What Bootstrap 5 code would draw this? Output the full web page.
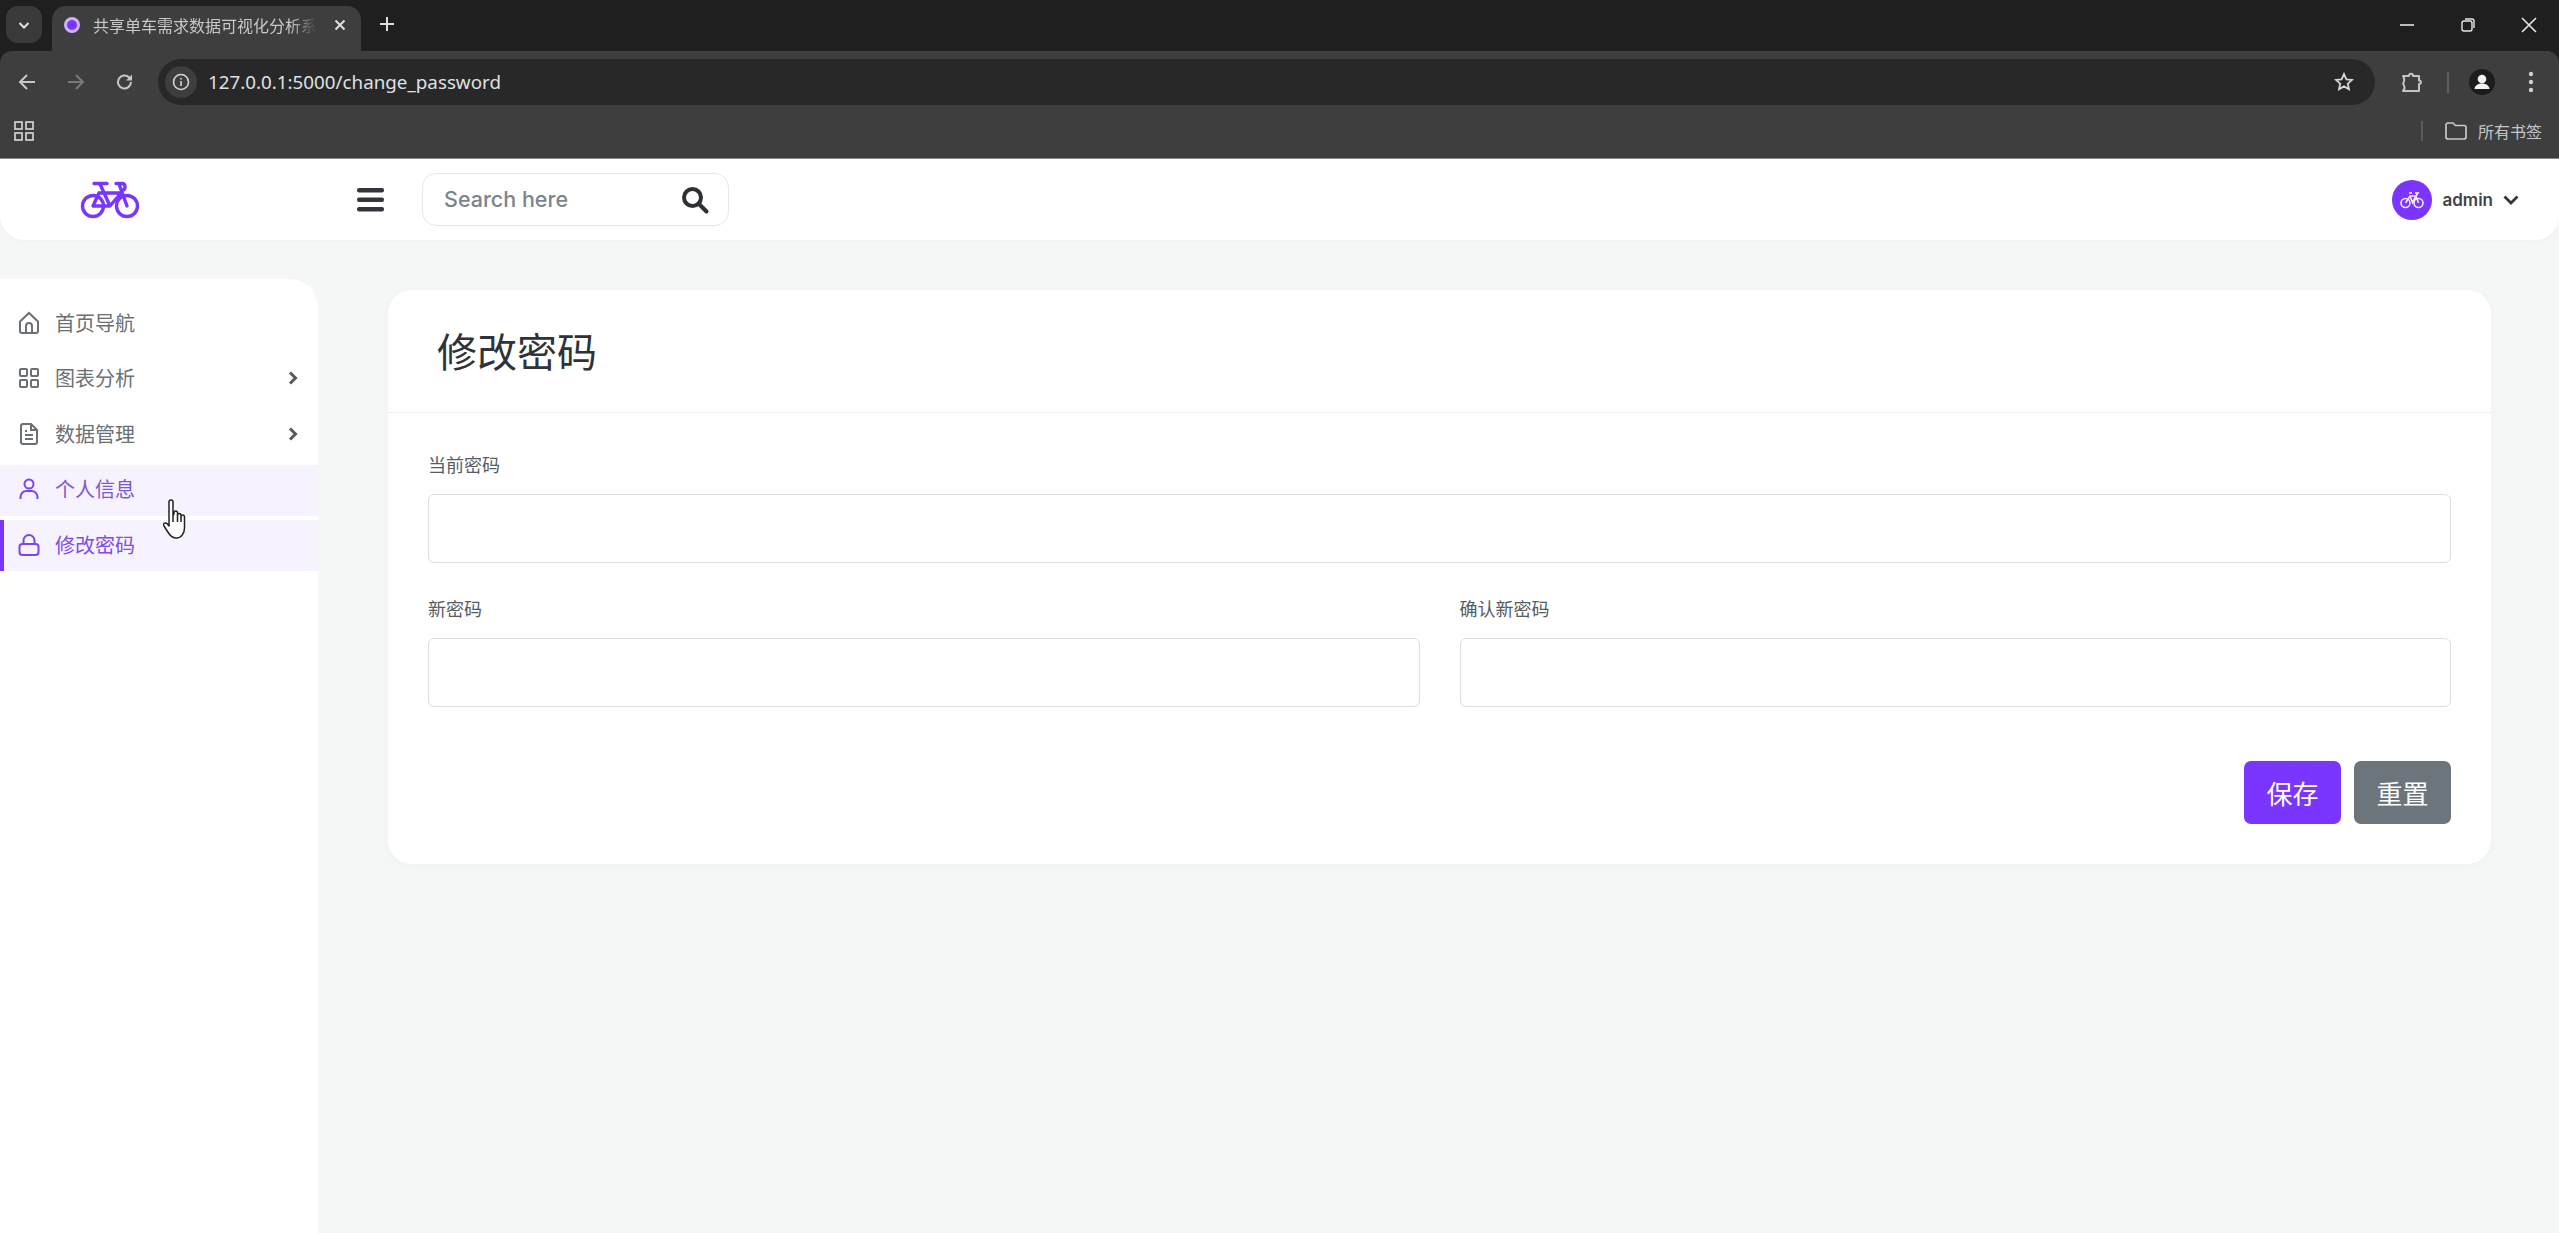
<!DOCTYPE html>
<html lang="zh-CN">
<head>
  <meta charset="UTF-8">
  <title>共享单车需求数据可视化分析系统</title>
  <link rel="stylesheet" href="https://cdn.jsdelivr.net/npm/bootstrap@5.3.0/dist/css/bootstrap.min.css">
  <style>
    html, body { height: 100%; }
    body { background: #f5f7f7; overflow: hidden; font-family: Inter, "Noto Sans CJK SC", sans-serif; position: relative; }

    /* browser chrome */
    .chrome-wrap { background: #1f1f1f; }
    .tab-strip { height: 51px; padding: 6px 0 0 6px; color: #dcdcdc; }
    .tab-more { width: 36px; height: 37px; border-radius: 12px; background: #3a3a3a; margin-right: 10px; }
    .tab-active { width: 309px; height: 45px; background: #3e3e3e; border-radius: 14px 14px 0 0; padding: 0 14px 7px 12px; }
    .tab-fav { width: 16px; height: 16px; border-radius: 50%; background: #7a35ff; border: 3px solid #c9b5f5; margin-right: 13px; flex: none; }
    .tab-title { width: 224px; font: 16px/20px "Noto Sans CJK SC", sans-serif; color: #c8c8c8; white-space: nowrap; -webkit-mask-image: linear-gradient(to right, #000 88%, transparent); mask-image: linear-gradient(to right, #000 88%, transparent); }
    .win-ctrls { gap: 45px; padding-right: 22px; padding-bottom: 7px; }
    .tool-row { height: 49px; background: #3e3e3e; border-radius: 12px 12px 0 0; padding: 8px 0 0 18px; }
    .tool-nav { gap: 31px; width: 140px; height: 46px; }
    .tool-right { height: 46px; }
    .url-pill { width: 2217px; height: 46px; background: #282828; border-radius: 23px; padding: 0 21px 0 7px; }
    .url-info { width: 32px; height: 32px; border-radius: 50%; background: #3e3e3e; margin-right: 11px; }
    .url-text { font: 18.8px/24px "Noto Sans", sans-serif; color: #dfe1e3; }
    .ext-ico { margin-left: 26px; }
    .ext-bar { height: 21px; margin-left: 24px; }
    .me-ico { margin-left: 20px; }
    .dots-ico { margin-left: 33px; }
    .bm-row { height: 59px; background: #3e3e3e; border-bottom: 1px solid #8a8a8a; padding: 4px 17px 0 14px; }
    .bm-text { font: 16px/20px "Noto Sans CJK SC", sans-serif; color: #c4c7c5; }
    .bm-bar { height: 20px; }
    .bm-folder { margin: 0 11px 0 22px; }
    .v-bar { width: 2px; background: #5c5c5c; }

    /* app header */
    .top-bar { height: 81px; background: #fff; border-radius: 0 0 24px 24px; padding: 0 40px 0 80px; box-shadow: 0 1px 4px rgba(60, 70, 80, .04); }
    .brand-wrap { width: 277px; }
    .search-box { width: 307px; height: 53px; border: 1px solid #e5e8ea; border-radius: 14px; margin-left: 38px; padding: 0 19px 0 21px; color: #7c848b; font-size: 21.5px; font-weight: 500; }
    .user-ava { width: 40px; height: 40px; border-radius: 50%; background: #7a35ff; }
    .user-name { font-size: 17px; font-weight: 600; color: #3f4448; margin: 0 10px 0 10px; line-height: 20px; }

    /* sidebar */
    .page-row { height: 993px; }
    .side-nav { width: 318px; margin-top: 39px; background: #fff; border-radius: 0 28px 0 0; padding-top: 19px; flex: none; gap: 4.5px; }
    .side-link { height: 51px; padding: 0 20px 2px 18px; color: #6b7075; font: 20px/26px "Noto Sans CJK SC", sans-serif; }
    .side-link:hover { color: #6b7075; }
    .side-link svg.ico { margin-right: 15px; }
    .side-link .arrow { margin-left: auto; }
    .side-hover { background: #f6f2fe; color: #7d58d0; }
    .side-hover:hover { color: #7d58d0; }
    .side-active { background: #f6f2fe; color: #7f4de8; box-shadow: inset 4px 0 0 #7a35ff; }
    .side-active:hover { color: #7f4de8; }

    /* main card */
    .main-area { flex: 1; padding: 50px 68px 0 70px; }
    .pwd-card { border: 0; border-radius: 24px; background: #fff; box-shadow: 0 2px 8px rgba(60, 70, 80, .03); }
    .pwd-head { height: 123px; background: #fff; border-bottom: 1px solid #eceef0; border-radius: 24px 24px 0 0 !important; padding: 0 0 3px 49px; font: 40px/50px "Noto Sans CJK SC", sans-serif; color: #2f3338; }
    .pwd-body { padding: 39px 40px 40px; }
    .pwd-label { font: 18px/24px "Noto Sans CJK SC", sans-serif; color: #565c62; margin-bottom: 18px; display: block; }
    .pwd-input { height: 69px; border: 1px solid #dcdfe2; border-radius: 6px; }
    .pwd-gap { margin-bottom: 33px; }
    .pwd-row { --bs-gutter-x: 40px; }
    .pwd-btns { margin-top: 54px; gap: 13px; }
    .pwd-btn { width: 97px; height: 63px; font: 26px/34px "Noto Sans CJK SC", sans-serif; border-radius: 7px; border: 0; color: #fff; padding: 0; }
    .btn-save { background: #7a35ff; }
    .btn-reset { background: #6d757c; }

    .hand-cursor { position: absolute; left: 163px; top: 499px; }
  </style>
</head>
<body>
  <div class="chrome-wrap">
    <div class="tab-strip d-flex align-items-start">
      <div class="tab-more d-flex align-items-center justify-content-center">
        <svg width="14" height="14" viewBox="0 0 14 14" fill="none" stroke="#e3e3e3" stroke-width="2"><path d="M2.500 5l4.500 4.500L11.500 5"/></svg>
      </div>
      <div class="tab-active d-flex align-items-center">
        <span class="tab-fav"></span>
        <span class="tab-title">共享单车需求数据可视化分析系</span>
        <svg class="ms-auto" width="14" height="14" viewBox="0 0 14 14" fill="none" stroke="#dedede" stroke-width="2"><path d="M2.500 2.500l9 9M11.500 2.500l-9 9"/></svg>
      </div>
      <svg class="ms-3 mt-2" width="20" height="20" viewBox="0 0 20 20" fill="none" stroke="#dedede" stroke-width="2"><path d="M10 3v14M3 10h14"/></svg>
      <div class="win-ctrls d-flex align-items-center ms-auto h-100">
        <svg width="16" height="16" viewBox="0 0 16 16" fill="none" stroke="#e6e6e6" stroke-width="1.600"><path d="M1 8h14"/></svg>
        <svg width="16" height="16" viewBox="0 0 16 16" fill="none" stroke="#e6e6e6" stroke-width="1.400"><rect x="2" y="4" width="10" height="10" rx="2"/><path d="M5 2h7a2 2 0 0 1 2 2v7"/></svg>
        <svg width="16" height="16" viewBox="0 0 16 16" fill="none" stroke="#e6e6e6" stroke-width="1.600"><path d="M1 1l14 14M15 1L1 15"/></svg>
      </div>
    </div>

    <div class="tool-row d-flex align-items-start">
      <div class="tool-nav d-flex align-items-center">
        <svg width="18" height="18" viewBox="0 0 18 18" fill="none" stroke="#c7c7c7" stroke-width="2"><path d="M17 9H2M9 2L2 9l7 7"/></svg>
        <svg width="18" height="18" viewBox="0 0 18 18" fill="none" stroke="#7a7a7a" stroke-width="2"><path d="M1 9h15M9 2l7 7-7 7"/></svg>
        <svg width="18" height="18" viewBox="0 0 18 18" fill="none" stroke="#c7c7c7" stroke-width="2"><path d="M15 9a6.500 6.500 0 1 1-2-4.700L15.500 6.500"/><path d="M16 1.500v6h-6" fill="#c7c7c7" stroke="none"/></svg>
      </div>
      <div class="url-pill d-flex align-items-center">
        <span class="url-info d-flex align-items-center justify-content-center">
          <svg width="18" height="18" viewBox="0 0 18 18" fill="none" stroke="#d5d5d5" stroke-width="1.600"><circle cx="9" cy="9" r="7.500"/><path d="M9 8v5M9 5v1.600"/></svg>
        </span>
        <span class="url-text">127.0.0.1:5000/change_password</span>
        <svg class="ms-auto" width="20" height="20" viewBox="0 0 20 20" fill="none" stroke="#d8d8d8" stroke-width="1.800"><path d="M10 2l2.400 5.300 5.600.6-4.200 3.800 1.200 5.600-5-2.900-5 2.900 1.200-5.600L2 7.900l5.600-.6z"/></svg>
      </div>
      <div class="tool-right d-flex align-items-center flex-grow-1">
        <svg class="ext-ico" width="22" height="22" viewBox="0 0 22 22" fill="none" stroke="#c4c4c4" stroke-width="2" stroke-linejoin="round"><path d="M2 5H8c0-3 4-3 4 0h6v4.500c2.500 0 2.500 3.500 0 3.500v7H2c1.800-2 1.800-5 0-7.500 1.500-2 1.500-5 0-7.500z"/></svg>
        <span class="v-bar ext-bar"></span>
        <svg class="me-ico" width="26" height="26" viewBox="0 0 26 26"><circle cx="13" cy="13" r="13" fill="#1c1c1c"/><circle cx="13" cy="10" r="4.300" fill="#f2f2f2"/><path d="M5.500 20c.5-4 4-5.500 7.500-5.500s7 1.500 7.500 5.500z" fill="#f2f2f2"/></svg>
        <svg class="dots-ico" width="6" height="22" viewBox="0 0 6 22" fill="#cfcfcf"><circle cx="3" cy="3" r="2.200"/><circle cx="3" cy="11" r="2.200"/><circle cx="3" cy="19" r="2.200"/></svg>
      </div>
    </div>

    <div class="bm-row d-flex align-items-center">
      <svg width="20" height="20" viewBox="0 0 20 20" fill="none" stroke="#c9c9c9" stroke-width="1.800"><rect x="1" y="1" width="7" height="7"/><rect x="12" y="1" width="7" height="7"/><rect x="1" y="12" width="7" height="7"/><rect x="12" y="12" width="7" height="7"/></svg>
      <span class="v-bar bm-bar ms-auto"></span>
      <svg class="bm-folder" width="22" height="18" viewBox="0 0 22 18" fill="none" stroke="#c9c9c9" stroke-width="1.700"><path d="M1 3a2 2 0 0 1 2-2h5l2.500 2.500H19a2 2 0 0 1 2 2V15a2 2 0 0 1-2 2H3a2 2 0 0 1-2-2z"/></svg>
      <span class="bm-text">所有书签</span>
    </div>
  </div>

  <div class="top-bar d-flex flex-nowrap align-items-center">
    <div class="brand-wrap d-flex align-items-center">
      <svg width="60" height="38" viewBox="0 0 60 38" fill="none" stroke="#7a35ff" stroke-width="3.400" stroke-linejoin="round" stroke-linecap="round">
        <circle cx="13" cy="25" r="10.500"/><circle cx="47" cy="25" r="10.500"/>
        <path d="M14 2.500h13M20 3l10 22M13 25h17l11-13H19zM19 12l-6 13M36 2.500h6c4 0 4 6.500 0 7M39 3l8 22"/>
      </svg>
    </div>
    <svg width="27" height="24" viewBox="0 0 27 24" fill="#33363a"><rect width="27" height="4.500" rx="2"/><rect y="9.500" width="27" height="4.500" rx="2"/><rect y="19" width="27" height="4.500" rx="2"/></svg>
    <div class="search-box d-flex align-items-center justify-content-between">
      <span>Search here</span>
      <svg width="28" height="28" viewBox="0 0 28 28" fill="none" stroke="#2d3034" stroke-width="4" stroke-linecap="round"><circle cx="11.500" cy="11.500" r="8.500"/><path d="M18 18l7.500 7.500"/></svg>
    </div>
    <div class="d-flex align-items-center ms-auto">
      <span class="user-ava d-flex align-items-center justify-content-center">
        <svg width="24" height="18" viewBox="0 0 24 18" fill="none" stroke="#f1e9ff" stroke-width="1.600"><circle cx="5.500" cy="12" r="4.500"/><circle cx="18.500" cy="12" r="4.500"/><path d="M5.500 12L10 5h6l2.500 7M10 5l2.500 6.500L16 5M9 2h3M15 2h3l-2 3"/></svg>
      </span>
      <span class="user-name">admin</span>
      <svg width="16" height="12" viewBox="0 0 16 12" fill="none" stroke="#33363a" stroke-width="2.800"><path d="M1.500 2.500L8 9l6.500-6.500"/></svg>
    </div>
  </div>

  <div class="page-row d-flex">
    <aside class="side-nav nav flex-column flex-nowrap">
      <a class="side-link nav-link d-flex align-items-center" href="#">
        <svg class="ico" width="22" height="24" viewBox="0 0 22 24" fill="none" stroke="#6b7075" stroke-width="2"><path d="M2 10.500L11 2l9 8.500V20a2 2 0 0 1-2 2H4a2 2 0 0 1-2-2z"/><path d="M8 22v-7a3 3 0 0 1 6 0v7"/></svg>首页导航
      </a>
      <a class="side-link nav-link d-flex align-items-center" href="#">
        <svg class="ico" width="22" height="22" viewBox="0 0 22 22" fill="none" stroke="#6b7075" stroke-width="2"><rect x="2" y="2" width="7" height="7" rx="1"/><rect x="13" y="2" width="7" height="7" rx="1"/><rect x="2" y="13" width="7" height="7" rx="1"/><rect x="13" y="13" width="7" height="7" rx="1"/></svg>图表分析
        <svg class="arrow" width="10" height="14" viewBox="0 0 10 14" fill="none" stroke="#55595e" stroke-width="3"><path d="M2 1.500L7.500 7 2 12.500"/></svg>
      </a>
      <a class="side-link nav-link d-flex align-items-center" href="#">
        <svg class="ico" width="22" height="24" viewBox="0 0 22 24" fill="none" stroke="#6b7075" stroke-width="2"><path d="M3 4a2 2 0 0 1 2-2h8l6 6v12a2 2 0 0 1-2 2H5a2 2 0 0 1-2-2z"/><path d="M13 2v6h6M7 13h8M7 17h8M7 9h2"/></svg>数据管理
        <svg class="arrow" width="10" height="14" viewBox="0 0 10 14" fill="none" stroke="#55595e" stroke-width="3"><path d="M2 1.500L7.500 7 2 12.500"/></svg>
      </a>
      <a class="side-link side-hover nav-link d-flex align-items-center" href="#">
        <svg class="ico" width="22" height="24" viewBox="0 0 22 24" fill="none" stroke="#7a45ee" stroke-width="2"><circle cx="11" cy="7" r="4.500"/><path d="M2.500 22v-2a6 6 0 0 1 6-6h5a6 6 0 0 1 6 6v2"/></svg>个人信息
      </a>
      <a class="side-link side-active nav-link d-flex align-items-center" href="#">
        <svg class="ico" width="22" height="24" viewBox="0 0 22 24" fill="none" stroke="#7a45ee" stroke-width="2"><rect x="1.500" y="11" width="19" height="11" rx="3"/><path d="M5.500 11V7.500a5.500 5.500 0 0 1 11 0V11"/></svg>修改密码
      </a>
    </aside>

    <main class="main-area">
      <div class="card pwd-card">
        <div class="card-header pwd-head d-flex align-items-center">修改密码</div>
        <div class="card-body pwd-body">
          <form>
            <div class="pwd-gap">
              <label class="pwd-label">当前密码</label>
              <input type="password" class="form-control pwd-input">
            </div>
            <div class="row pwd-row">
              <div class="col-6">
                <label class="pwd-label">新密码</label>
                <input type="password" class="form-control pwd-input">
              </div>
              <div class="col-6">
                <label class="pwd-label">确认新密码</label>
                <input type="password" class="form-control pwd-input">
              </div>
            </div>
            <div class="pwd-btns d-flex justify-content-end">
              <button type="button" class="btn pwd-btn btn-save">保存</button>
              <button type="button" class="btn pwd-btn btn-reset">重置</button>
            </div>
          </form>
        </div>
      </div>
    </main>
  </div>

  <svg class="hand-cursor" width="24" height="42" viewBox="0 0 24 42" fill="#fff" stroke="#222" stroke-width="1.500" stroke-linejoin="round"><path d="M6 3a2 2 0 0 1 4 0v13l1-1v-1.500a1.800 1.800 0 0 1 3.500 0V16a1.800 1.800 0 0 1 3.500 0v1.500a1.800 1.800 0 0 1 3.500 0V29c0 5-3 10-8 10-4 0-6-2-8-5l-4.500-7c-1.500-2 1-4 3-2.500L6 27z"/><path d="M10 16v7M14.500 16v7M18 17.500V23" fill="none"/></svg>

  <script src="https://cdn.jsdelivr.net/npm/bootstrap@5.3.0/dist/js/bootstrap.bundle.min.js"></script>
</body>
</html>
